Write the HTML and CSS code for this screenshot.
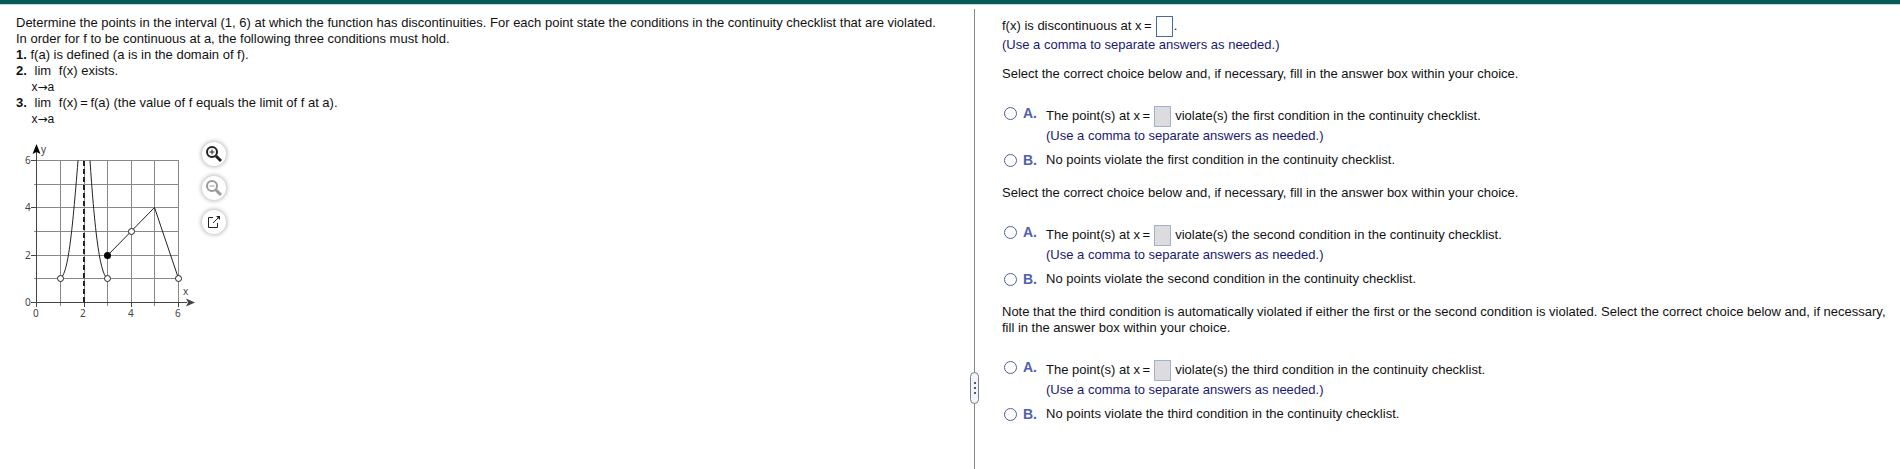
FILE: index.html
```html
<!DOCTYPE html>
<html lang="en">
<head>
  <meta charset="utf-8">
  <title>Continuity Checklist</title>
  <link rel="stylesheet" href="styles.css">
</head>
<body>
  <main class="exercise">
    <section class="question">
      <p>Determine the points in the interval (1, 6) at which the function has discontinuities. For each point state the conditions in the continuity checklist that are violated.</p>
      <p>In order for f to be continuous at a, the following three conditions must hold.</p>
      <p><b>1.</b> f(a) is defined (a is in the domain of f).</p>
      <div class="limit-row">
        <b>2.</b>
        <span class="limit">lim<small>x<span class="to">→</span>a</small></span>
        <span>f(x) exists.</span>
      </div>
      <div class="limit-row">
        <b>3.</b>
        <span class="limit">lim<small>x<span class="to">→</span>a</small></span>
        <span>f(x)&thinsp;=&thinsp;f(a) (the value of f equals the limit of f at a).</span>
      </div>

      <div class="figure">
        <svg class="graph" width="184" height="184" viewBox="0 0 184 184" role="img" aria-label="Graph of f">
          <!-- grid -->
          <path class="grid" d="M44.5 20V166M68.5 20V166M91.5 20V166M115.5 20V166M138.5 20V166M162.5 20V166M18 138.5H163M18 115.5H163M18 91.5H163M18 67.5H163M18 44.5H163M18 20.5H163"/>
          <!-- axes -->
          <path class="axis" d="M20.5 10V167M15 162.5H171M15 115.5H21M15 67.5H21M15 20.5H21M68.5 162V167M115.5 162V167M162.5 162V167"/>
          <path class="arrow" d="M20.5 4L24.5 14L20.5 12L16.5 14Z"/>
          <path class="arrow arrow-x" d="M179 162.5L170 158.5L172 162.5L170 166.5Z"/>
          <!-- function -->
          <path class="asymptote" d="M68 21V162"/>
          <path class="curve" d="M44.5 138.5C52 133 56 96 62 20.5M74 20.5C78 80 83 134 91.5 138.5M91.5 115.5L138.5 67.5L162.5 138.5"/>
          <circle class="open" cx="44.5" cy="138.5" r="3"/>
          <circle class="open" cx="91.5" cy="138.5" r="3"/>
          <circle class="closed" cx="91.5" cy="115.5" r="3.5"/>
          <circle class="open" cx="115.5" cy="91.5" r="3"/>
          <circle class="open" cx="162.5" cy="138.5" r="3"/>
          <g class="ticks">
            <text x="9" y="24">6</text>
            <text x="9" y="71">4</text>
            <text x="9" y="119">2</text>
            <text x="9" y="166">0</text>
            <text x="17" y="177">0</text>
            <text x="64" y="177">2</text>
            <text x="112" y="177">4</text>
            <text x="159" y="177">6</text>
            <text x="25" y="13">y</text>
            <text x="167" y="155">x</text>
          </g>
        </svg>
        <div class="tools">
          <button type="button" aria-label="Zoom in">
            <svg width="18" height="18" viewBox="0 0 18 18"><circle cx="7" cy="7" r="5"/><path class="sign" d="M4.5 7H9.5M7 4.5V9.5"/><path class="handle" d="M11 11L16 16"/></svg>
          </button>
          <button type="button" aria-label="Zoom out" disabled>
            <svg width="18" height="18" viewBox="0 0 18 18"><circle cx="7" cy="7" r="5"/><path class="sign" d="M4.5 7H9.5"/><path class="handle" d="M11 11L16 16"/></svg>
          </button>
          <button type="button" aria-label="Open in new window">
            <svg class="thin" width="18" height="18" viewBox="0 0 18 18"><path d="M8 4.5H3.5V14.5H12.5V10M8 10L13 5"/><path class="fill" d="M11 3H15V7Z"/></svg>
          </button>
        </div>
      </div>
    </section>

    <div class="divider"><button type="button" aria-label="Resize panes"><i></i><i></i><i></i></button></div>

    <section class="answers">
      <div class="answer-line"><label for="points">f(x) is discontinuous at x&thinsp;=</label> <input type="text" id="points">.</div>
      <p class="hint">(Use a comma to separate answers as needed.)</p>

      <p class="prompt">Select the correct choice below and, if necessary, fill in the answer box within your choice.</p>
      <div class="choice">
        <input type="radio" name="first" id="first-a">
        <label class="letter" for="first-a">A.</label>
        <div class="choice-text">
          <div class="answer-line"><label for="first-points">The point(s) at x&thinsp;=</label> <input type="text" id="first-points" disabled> violate(s) the first condition in the continuity checklist.</div>
          <p class="hint">(Use a comma to separate answers as needed.)</p>
        </div>
      </div>
      <div class="choice">
        <input type="radio" name="first" id="first-b">
        <label class="letter" for="first-b">B.</label>
        <label for="first-b">No points violate the first condition in the continuity checklist.</label>
      </div>

      <p class="prompt">Select the correct choice below and, if necessary, fill in the answer box within your choice.</p>
      <div class="choice">
        <input type="radio" name="second" id="second-a">
        <label class="letter" for="second-a">A.</label>
        <div class="choice-text">
          <div class="answer-line"><label for="second-points">The point(s) at x&thinsp;=</label> <input type="text" id="second-points" disabled> violate(s) the second condition in the continuity checklist.</div>
          <p class="hint">(Use a comma to separate answers as needed.)</p>
        </div>
      </div>
      <div class="choice">
        <input type="radio" name="second" id="second-b">
        <label class="letter" for="second-b">B.</label>
        <label for="second-b">No points violate the second condition in the continuity checklist.</label>
      </div>

      <p class="prompt">Note that the third condition is automatically violated if either the first or the second condition is violated. Select the correct choice below and, if necessary, fill in the answer box within your choice.</p>
      <div class="choice">
        <input type="radio" name="third" id="third-a">
        <label class="letter" for="third-a">A.</label>
        <div class="choice-text">
          <div class="answer-line"><label for="third-points">The point(s) at x&thinsp;=</label> <input type="text" id="third-points" disabled> violate(s) the third condition in the continuity checklist.</div>
          <p class="hint">(Use a comma to separate answers as needed.)</p>
        </div>
      </div>
      <div class="choice">
        <input type="radio" name="third" id="third-b">
        <label class="letter" for="third-b">B.</label>
        <label for="third-b">No points violate the third condition in the continuity checklist.</label>
      </div>
    </section>
  </main>
</body>
</html>
```
FILE: styles.css
```css
* {
  box-sizing: border-box;
}
body {
  margin: 0;
  min-height: 100vh;
  display: flex;
  flex-direction: column;
  border-top: 4px solid #075b55;
  background-color: #fff;
  color: #111;
  font-family: "Liberation Sans", Arial, sans-serif;
  font-size: 13px;
  line-height: 16px;
}
p {
  margin: 0;
}
.exercise {
  flex: 1;
  display: grid;
  grid-template-columns: 970fr 9px 921fr;
  border-top: 1px solid #b5dcda;
}
.question {
  padding: 10px 16px;
}
.limit-row {
  display: flex;
  gap: 8px;
}
.limit {
  width: 16px;
  display: flex;
  flex-direction: column;
  align-items: center;
}
.limit small {
  display: flex;
  font-size: 12px;
}
.to {
  font-family: "DejaVu Sans", sans-serif;
}

/* graph and its buttons */
.figure {
  display: flex;
  gap: 2px;
  margin-top: 13px;
}
.grid, .axis, .curve, .asymptote {
  fill: none;
  stroke: #222;
}
.grid {
  stroke: #888;
}
.axis {
  stroke: #444;
}
.asymptote {
  stroke-width: 2;
  stroke-dasharray: 5 3;
}
.open {
  fill: #fff;
  stroke: #222;
}
.arrow-x {
  fill: #444;
}
.ticks {
  fill: #444;
  font-family: "Noto Sans", sans-serif;
  font-size: 10px;
}
.tools {
  display: flex;
  flex-direction: column;
  gap: 10px;
  padding-top: 2px;
}
.tools button {
  width: 24px;
  height: 24px;
  padding: 3px;
  border: 0;
  border-radius: 50%;
  background-color: #fff;
  box-shadow: 0 0 4px 1px #bbb;
}
.tools svg {
  display: block;
  fill: none;
  stroke: #222;
  stroke-width: 2;
}
.tools .sign {
  stroke-width: 1;
}
.tools .handle {
  stroke-width: 3;
}
.tools .thin {
  stroke-width: 1;
}
.tools .fill {
  fill: #222;
  stroke: none;
}
.tools button:disabled svg {
  stroke: #999;
}

/* splitter */
.divider {
  display: flex;
  justify-content: center;
  align-items: flex-end;
  margin-top: 4px;
  padding-bottom: 65px;
  background: linear-gradient(#888, #888) center / 1px 100% no-repeat;
}
.divider button {
  width: 9px;
  height: 32px;
  padding: 0;
  display: flex;
  flex-direction: column;
  align-items: center;
  justify-content: center;
  gap: 3px;
  border: 1px solid #777f8c;
  border-radius: 5px;
  background-color: #f2f5fb;
}
.divider i {
  width: 2px;
  height: 2px;
  background-color: #556;
}

/* answers */
.answers {
  padding: 10px 12px 10px 23px;
}
.answer-line {
  display: flex;
  align-items: center;
  height: 22px;
}
.answer-line input {
  width: 17px;
  height: 21px;
  margin: 0 1px 0 4px;
  padding: 0;
  border: 1px solid #46699f;
  background-color: #fff;
}
.answer-line input:disabled {
  margin-right: 4px;
  border-color: #9fb0d0;
  background-color: #dcdcde;
}
.hint {
  color: #191970;
}
.choice .hint {
  margin-top: 1px;
}
.prompt {
  margin: 13px 0 23px;
}
.choice + .prompt {
  margin-top: 17px;
}
.choice {
  display: flex;
  align-items: flex-start;
  margin-bottom: 8px;
}
.choice input[type="radio"] {
  appearance: none;
  flex: none;
  width: 13px;
  height: 13px;
  margin: 2px 6px 0 2px;
  border: 1px solid #4a629c;
  border-radius: 50%;
  background-color: #fff;
}
.letter {
  width: 23px;
  color: #4f60ae;
  font-size: 14px;
  font-weight: bold;
}
```
